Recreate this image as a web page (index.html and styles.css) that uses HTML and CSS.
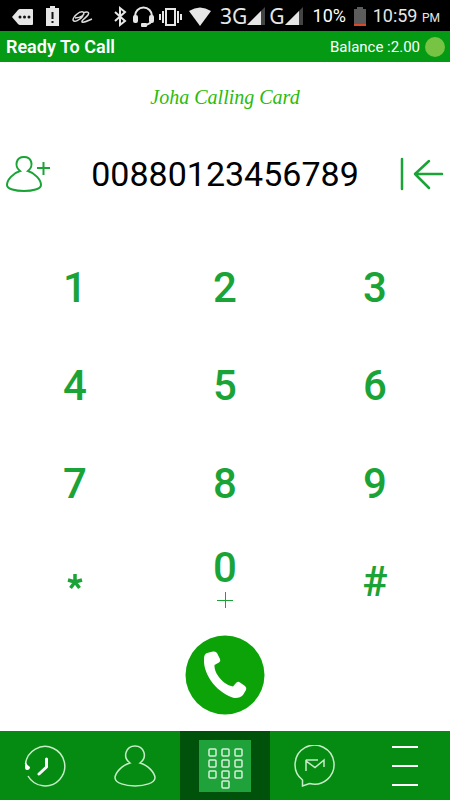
FILE: index.html
```html
<!DOCTYPE html>
<html lang="en">
<head>
<meta charset="utf-8">
<meta name="viewport" content="width=device-width, initial-scale=1">
<title>Joha Calling Card</title>
<link rel="stylesheet" href="styles.css">
</head>
<body>
<div class="phone">
  <div class="status">
    <svg class="status-icons" width="82" height="30" viewBox="0 0 82 30" aria-hidden="true">
      <path fill="#e6e6e6" d="M0 16 6 9Q7 8 8 8H20Q21 8 21 9V23Q21 24 20 24H8Q7 24 6 23Z"/>
      <g fill="#111"><circle cx="8" cy="16" r="1.5"/><circle cx="12.500" cy="16" r="1.500"/><circle cx="17" cy="16" r="1.500"/></g>
      <path fill="#e6e6e6" d="M34 7H38V5H43V7H47V25H34Z"/>
      <path stroke="#111" stroke-width="2" d="M40.500 11v7M40.500 20v2"/>
      <path fill="none" stroke="#ddd" stroke-width="1.500" d="M63 17C69 17 74 13 71 11C67 10 61 16 61 19C62 22 68 19 71 15M71 12C75 10 78 11 76 14C74 17 69 19 70 21C73 22 77 19 80 18"/>
    </svg>
    <svg class="status-icons" width="98" height="30" viewBox="0 0 98 30" aria-hidden="true">
      <path fill="none" stroke="#e6e6e6" stroke-width="2" d="M1 11 11 20 6 24V7L11 11 1 20"/>
      <path fill="none" stroke="#e6e6e6" stroke-width="2" d="M21 17V15A8.500 8.500 0 0 1 38 15V17Q38 24 29 24"/>
      <g fill="#e6e6e6"><rect x="19" y="14" width="5" height="8" rx="2"/><rect x="35" y="14" width="5" height="8" rx="2"/><rect x="27" y="22" width="6" height="4" rx="1"/></g>
      <path fill="none" stroke="#e6e6e6" stroke-width="2" d="M52 8H61V24H52ZM49 10V22M64 10V22M46 13V19M67 13V19"/>
      <path fill="#e6e6e6" d="M75 10Q86 3 97 10L86 25Z"/>
    </svg>
    <span class="network">3G</span>
    <svg class="signal" width="18" height="30" viewBox="0 0 18 30" aria-hidden="true"><path fill="#444" d="M18 6V24H0Z"/><path fill="#e6e6e6" d="M14 10V24H0Z"/></svg>
    <span class="network">G</span>
    <svg class="signal" width="18" height="30" viewBox="0 0 18 30" aria-hidden="true"><path fill="#444" d="M18 6V24H0Z"/><path fill="#e6e6e6" d="M14 10V24H0Z"/></svg>
    <span class="percent">10%</span>
    <svg class="battery" width="12" height="30" viewBox="0 0 12 30" aria-hidden="true"><path fill="#5c5c5c" d="M0 8H3V6H9V8H12V25H0Z"/><path fill="#d8492a" d="M0 23H12V25H0Z"/></svg>
    <span class="clock">10:59 <small>PM</small></span>
  </div>
  <header class="account">
    <strong class="ready">Ready To Call</strong>
    <span class="balance">Balance :2.00</span>
    <span class="dot"></span>
  </header>
  <main class="dialer">
    <h1 class="brand">Joha Calling Card</h1>
    <div class="entry">
      <button class="entry-action" aria-label="Add contact">
        <svg width="44" height="36" viewBox="0 0 44 36"><path fill="none" stroke="#1aa336" stroke-width="2" d="M13 14C7 9 9 0 17 0S27 9 21 14C28 16 34 23 34 28C34 36 0 36 0 28C0 23 6 16 13 14Z" transform="translate(1 1)"/><path stroke="#1aa336" stroke-width="2" d="M31 12H44M37.500 6V19"/></svg>
      </button>
      <input class="number" type="tel" value="00880123456789" aria-label="Phone number">
      <button class="entry-action" aria-label="Delete digit">
        <svg width="44" height="36" viewBox="0 0 44 36"><path fill="none" stroke="#1aa336" stroke-width="2.500" stroke-linecap="round" stroke-linejoin="round" d="M2 3V33M29 5 15 18 29 32M15 18H42"/></svg>
      </button>
    </div>
    <div class="keypad">
      <button>1</button><button>2</button><button>3</button>
      <button>4</button><button>5</button><button>6</button>
      <button>7</button><button>8</button><button>9</button>
      <button aria-label="Star"><svg width="16" height="16" viewBox="0 0 16 16"><path stroke="#1aa336" stroke-width="3.500" d="M8 8V0M8 8 1 6M8 8 15 6M8 8 3.500 14M8 8 12.500 14"/></svg></button>
      <button class="zero">0<svg width="16" height="16" viewBox="0 0 16 16" aria-hidden="true"><path stroke="#1aa336" d="M0 8.500H16M8.500 0V16"/></svg></button>
      <button>#</button>
    </div>
    <button class="call" aria-label="Call">
      <svg width="80" height="80" viewBox="0 0 80 80"><circle cx="40" cy="40" r="39.500" fill="#0ba307"/><path fill="#fff" d="M22 18 28 16.500Q31 16 32 18L35 24Q36 26 34 27.500L29.500 30C29 39 39 50 48 51.500L51 48Q53 46 55 47.500L60 51Q62 53 61 55L58 60Q55 63.500 49 63C34 59 18 41 19 24Q19 19 22 18Z"/></svg>
    </button>
  </main>
  <nav class="tabs">
    <button aria-label="Recent calls">
      <svg width="42" height="42" viewBox="0 0 42 42"><path fill="none" stroke="#c5edc6" stroke-width="1.500" d="M4 31A19.700 19.700 0 1 0 1.500 19"/><path fill="#fff" d="M1.500 15Q2 20 6 22Q6 25 3 25Q1 25 1 22Z"/><path fill="none" stroke="#fff" stroke-width="3" stroke-linecap="round" stroke-linejoin="round" d="M22.500 14V22L15 29"/></svg>
    </button>
    <button aria-label="Contacts">
      <svg width="42" height="42" viewBox="0 0 42 42"><path fill="none" stroke="#c5edc6" stroke-width="1.500" d="M16 18C8 12 12 1 21 1S34 12 26 18C34 20 41 28 41 33C40 43.500 2 43.500 1 33C1 28 8 20 16 18Z"/></svg>
    </button>
    <button class="active" aria-label="Keypad">
      <svg width="52" height="52" viewBox="0 0 52 52"><path fill="#20a23a" d="M0 0H52V52H0Z"/><g fill="none" stroke="#d7f0da" stroke-width="1.500"><rect x="10" y="9" width="7" height="7" rx="1"/><rect x="23" y="9" width="7" height="7" rx="1"/><rect x="36" y="9" width="7" height="7" rx="1"/><rect x="10" y="20" width="7" height="7" rx="1"/><rect x="23" y="20" width="7" height="7" rx="1"/><rect x="36" y="20" width="7" height="7" rx="1"/><rect x="10" y="31" width="7" height="7" rx="1"/><rect x="23" y="31" width="7" height="7" rx="1"/><rect x="36" y="31" width="7" height="7" rx="1"/><rect x="23" y="41" width="7" height="7" rx="1"/></g></svg>
    </button>
    <button aria-label="Messages">
      <svg width="42" height="42" viewBox="0 0 42 42"><path fill="none" stroke="#c5edc6" stroke-width="1.500" d="M8.500 41V35A19.500 19.500 0 1 1 15.500 38.500Z"/><path fill="none" stroke="#c5edc6" stroke-width="1.500" d="M12 26V16L21 22.500 30 15V22M12 15H24"/></svg>
    </button>
    <button aria-label="Menu">
      <svg width="26" height="42" viewBox="0 0 26 42"><path stroke="#fff" stroke-width="2" d="M0 2H26M0 21H26M0 40H26"/></svg>
    </button>
  </nav>
</div>
</body>
</html>
```
FILE: styles.css
```css
* {
  box-sizing: border-box;
}

body {
  margin: 0;
  background: #fff;
  font-family: Roboto, sans-serif;
}

svg {
  display: block;
  flex: none;
}

button {
  display: flex;
  align-items: center;
  justify-content: center;
  padding: 0;
  border: 0;
  background: none;
  font-family: inherit;
}

.phone {
  display: flex;
  flex-direction: column;
  min-height: 100vh;
}

.status {
  display: flex;
  align-items: center;
  height: 31px;
  padding: 0 10px 0 12px;
  background: #000;
  color: #e6e6e6;
  white-space: nowrap;
}

.status-icons + .status-icons {
  margin-left: 20px;
}

.network {
  margin-left: 8px;
  font: 21px/30px "Noto Sans", sans-serif;
}

.signal + .network {
  margin-left: 4px;
}

.percent {
  margin-left: 10px;
  color: #fff;
  font-size: 18px;
}

.battery {
  margin-left: 8px;
}

.clock {
  margin-left: auto;
  font-size: 18px;
}

.clock small {
  font-size: 12px;
}

.account {
  display: flex;
  align-items: center;
  height: 31px;
  padding: 0 5px 0 6px;
  background: #049a14;
  color: #fff;
}

.ready {
  margin-right: auto;
  font-size: 18px;
  font-weight: 600;
}

.balance {
  font-size: 15px;
}

.dot {
  width: 20px;
  height: 20px;
  margin-left: 5px;
  border-radius: 50%;
  background: #77c343;
}

.dialer {
  display: flex;
  flex: 1;
  flex-direction: column;
}

.brand {
  margin: 20px 0 0;
  color: #2cbb0b;
  font: italic 20px/30px "Monotype Corsiva", "Liberation Serif", serif;
  text-align: center;
}

.entry {
  display: flex;
  align-items: center;
  justify-content: space-between;
  height: 60px;
  margin-top: 32px;
  padding: 0 6px;
}

.number {
  flex: 1;
  min-width: 0;
  padding: 0;
  border: 0;
  outline: 0;
  background: none;
  color: #000;
  font: 34px/40px Roboto, sans-serif;
  text-align: center;
}

.keypad {
  display: grid;
  grid-template-columns: repeat(3, 1fr);
  grid-auto-rows: 98px;
  margin-top: 35px;
}

.keypad button {
  color: #1aa336;
  font-size: 42px;
  font-weight: 500;
  line-height: 48px;
}

.keypad .zero {
  flex-direction: column;
  padding-bottom: 12px;
}

.call {
  align-self: center;
  margin-top: 4px;
  border-radius: 50%;
}

.tabs {
  display: grid;
  grid-template-columns: repeat(5, 1fr);
  height: 69px;
  background: #058a12;
}

.tabs .active {
  background: #00510a;
}
```
